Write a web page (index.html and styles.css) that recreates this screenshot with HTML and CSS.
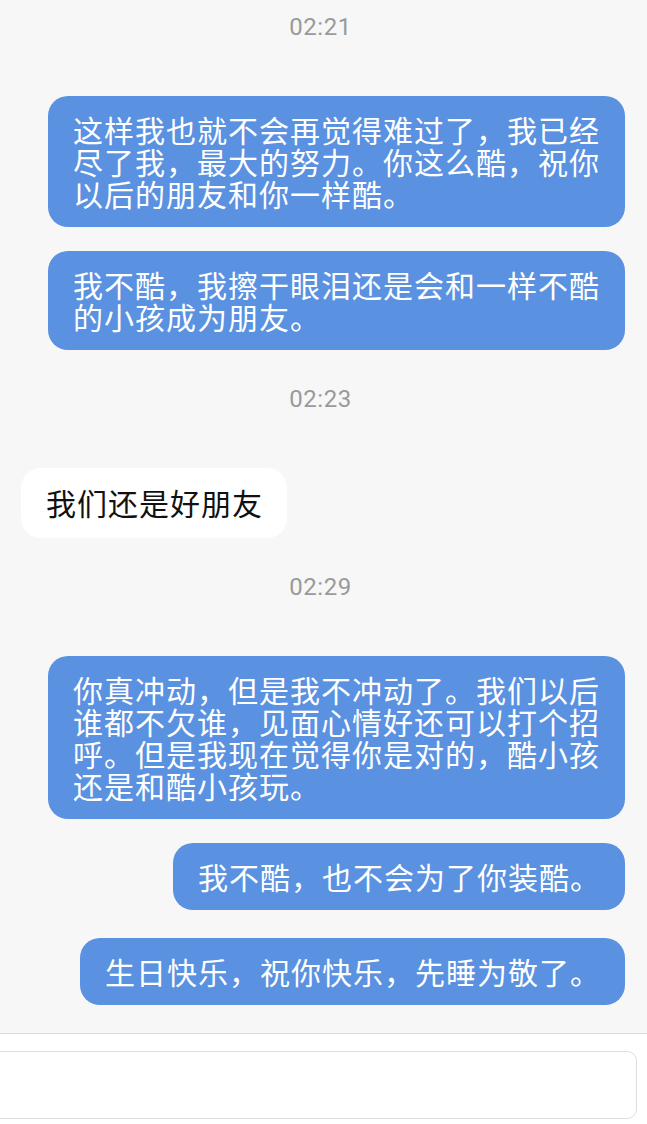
FILE: index.html
```html
<!DOCTYPE html>
<html lang="zh-CN">
<head>
    <meta charset="UTF-8">
    <meta name="viewport" content="width=device-width, initial-scale=1.0">
    <title>聊天</title>
    <link rel="stylesheet" href="styles.css">
</head>
<body>
    <div class="chat">
        <div class="time first">02:21</div>
        <div class="msg out">这样我也就不会再觉得难过了，我已经尽了我，最大的努力。你这么酷，祝你以后的朋友和你一样酷。</div>
        <div class="msg out">我不酷，我擦干眼泪还是会和一样不酷的小孩成为朋友。</div>

        <div class="time">02:23</div>
        <div class="msg in">我们还是好朋友</div>

        <div class="time">02:29</div>
        <div class="msg out">你真冲动，但是我不冲动了。我们以后谁都不欠谁，见面心情好还可以打个招呼。但是我现在觉得你是对的，酷小孩还是和酷小孩玩。</div>
        <div class="msg out">我不酷，也不会为了你装酷。</div>
        <div class="msg out last">生日快乐，祝你快乐，先睡为敬了。</div>
    </div>

    <div class="footer">
        <div class="input-box"></div>
    </div>
</body>
</html>
```

FILE: styles.css
```css
body {
    margin: 0;
    font-family: "Noto Sans CJK SC", "Noto Sans", sans-serif;
    background-color: #ffffff;
    overflow: hidden;
}

.chat {
    height: 1034px;
    box-sizing: border-box;
    background-color: #f7f7f7;
    border-bottom: 1px solid #dcdcdc;
    padding: 0 22px 0 21px;
    display: flex;
    flex-direction: column;
}

.time {
    font-family: Roboto, "Noto Sans", sans-serif;
    font-size: 24px;
    line-height: 30px;
    letter-spacing: 0.5px;
    color: #9a9a9a;
    text-align: center;
    padding-right: 5px;
    margin: 10px 0 54px;
}

.time.first {
    margin-top: 12px;
}

.msg {
    font-size: 30px;
    line-height: 32px;
    letter-spacing: 1px;
    padding: 17px 24px 18px 25px;
    border-radius: 20px;
    max-width: 577px;
    box-sizing: border-box;
    margin-bottom: 24px;
}

.msg.out {
    align-self: flex-end;
    background-color: #5a91e1;
    color: #ffffff;
}

.msg.out.last {
    margin-top: 4px;
}

.msg.in {
    align-self: flex-start;
    background-color: #ffffff;
    color: #111111;
    padding-top: 18px;
    padding-bottom: 20px;
}

.footer {
    padding: 17px 10px 0 0;
}

.input-box {
    height: 66px;
    margin-left: -20px;
    background: #ffffff;
    border: 1px solid #dedede;
    border-radius: 10px;
}
```
